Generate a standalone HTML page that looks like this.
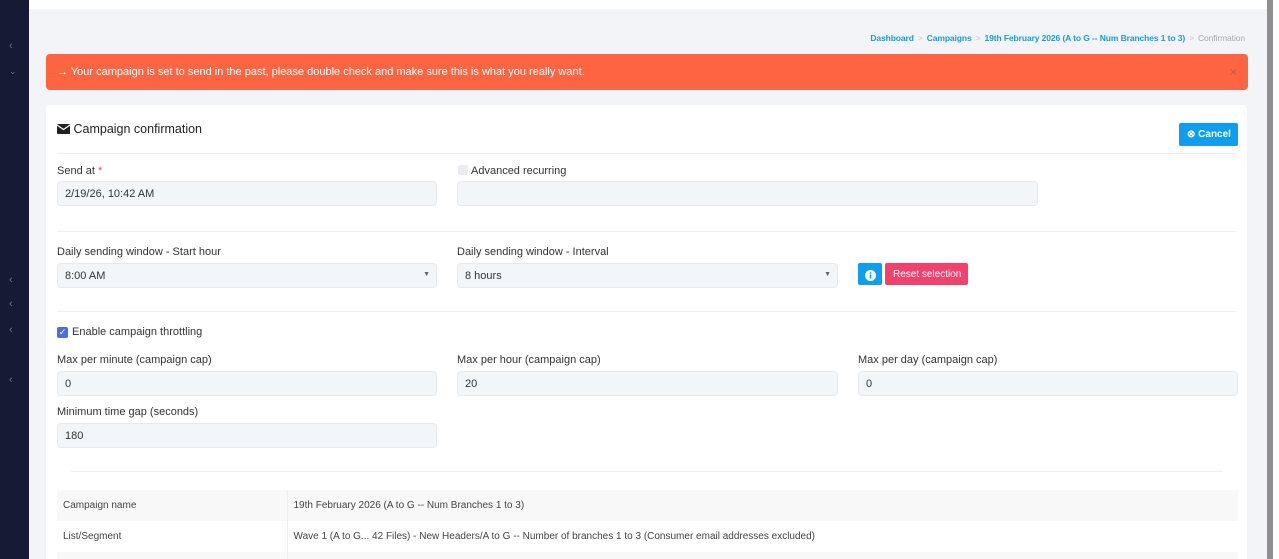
<!DOCTYPE html>
<html style="overflow:hidden;width:1279px;height:559px"><head><style>
*{box-sizing:border-box;margin:0;padding:0}
body{width:1279px;height:559px;overflow:hidden;background:#f2f4f7;font-family:"Liberation Sans",sans-serif;color:#333;position:relative}
.side{position:absolute;left:0;top:0;width:29px;height:559px;background:#151b33}
.side span{position:absolute;left:9px;color:#6a7190;font-size:11px}
.top{position:absolute;left:29px;top:0;right:0;height:9px;background:#fff}
.sb{position:absolute;left:1267px;top:0;width:6px;height:559px;background:#8f8f8f}
.sbw{position:absolute;left:1273px;top:0;width:6px;height:559px;background:#fff}
.bc{position:absolute;top:33px;right:34px;font-size:8.5px;font-weight:bold;color:#1a9be6;letter-spacing:-0.1px}
.bc i{font-style:normal;color:#c4c8cf;font-weight:normal;margin:0 4px}
.bc b{color:#a5aab2;font-weight:normal}
.alert{position:absolute;left:46px;top:54px;width:1202px;height:36px;background:#fd6442;border-radius:4px;color:#fff;font-size:11px;padding:12px 0 0 11px}
.alert .x{position:absolute;right:11px;top:11px;color:#b85a45;font-size:12px}
.card{position:absolute;left:46px;top:105px;width:1201px;height:454px;background:#fff;border-radius:4px 4px 0 0;overflow:hidden}
.abs{position:absolute}
.lbl{position:absolute;font-size:11px;color:#333}
.in{position:absolute;height:25px;background:#f3f6f9;border:1px solid #e6eaf0;border-radius:4px;font-size:11px;padding:6px 0 0 7px;color:#333}
.hr{position:absolute;height:1px;background:#edf0f3}
.arr{position:absolute;right:6px;top:7px;font-size:7px;color:#666}
td{font-size:10px;color:#444;height:31px;padding-left:6px}
</style></head><body>
<div class="side"><span style="top:40px">‹</span><span style="top:66px;font-size:9px">⌄</span><span style="top:274px">‹</span><span style="top:298px">‹</span><span style="top:324px">‹</span><span style="top:374px">‹</span></div>
<div class="top"></div>
<div class="bc">Dashboard<i>&gt;</i>Campaigns<i>&gt;</i>19th February 2026 (A to G -- Num Branches 1 to 3)<i>&gt;</i><b>Confirmation</b></div>
<div class="alert">→ Your campaign is set to send in the past, please double check and make sure this is what you really want.<span class="x">×</span></div>
<div class="card">
<div class="abs" style="left:11px;top:17px;font-size:12.5px;color:#222"><svg width="13" height="10" viewBox="0 0 13 10" style="vertical-align:-1px"><rect width="13" height="10" rx="1" fill="#222"/><path d="M0 1 L6.5 5.5 L13 1" stroke="#fff" stroke-width="1.2" fill="none"/></svg> Campaign confirmation</div>
<div class="abs" style="left:1133px;top:18px;width:59px;height:23px;background:#0d9ef0;border-radius:2px;color:#fff;font-size:10px;font-weight:bold;padding:6px 0 0 8px">⊗ Cancel</div>
<div class="hr" style="left:11px;top:48px;width:1179px"></div>
<div class="lbl" style="left:11px;top:60px">Send at <span style="color:#f1416c">*</span></div>
<div class="in" style="left:11px;top:76px;width:380px">2/19/26, 10:42 AM</div>
<div class="abs" style="left:412px;top:60px;width:10px;height:10px;background:#e8ebef;border-radius:2px"></div>
<div class="lbl" style="left:425px;top:60px">Advanced recurring</div>
<div class="in" style="left:411px;top:76px;width:581px"></div>
<div class="hr" style="left:11px;top:126px;width:1179px"></div>
<div class="lbl" style="left:11px;top:141px">Daily sending window - Start hour</div>
<div class="in" style="left:11px;top:158px;width:380px">8:00 AM<span class="arr">▼</span></div>
<div class="lbl" style="left:411px;top:141px">Daily sending window - Interval</div>
<div class="in" style="left:411px;top:158px;width:381px">8 hours<span class="arr">▼</span></div>
<div class="abs" style="left:812px;top:158px;width:24px;height:22px;background:#0d9ef0;border-radius:2px;text-align:center;padding-top:5px"><svg width="11" height="11" viewBox="0 0 11 11"><circle cx="5.5" cy="5.5" r="5.5" fill="#fff"/><rect x="4.8" y="4.5" width="1.5" height="4" fill="#0d9ef0"/><circle cx="5.5" cy="3" r="0.9" fill="#0d9ef0"/></svg></div>
<div class="abs" style="left:839px;top:158px;width:83px;height:22px;background:#f1416c;border-radius:2px;color:#fff;font-size:10px;padding:6px 0 0 8px">Reset selection</div>
<div class="hr" style="left:11px;top:206px;width:1179px"></div>
<div class="abs" style="left:11px;top:222px;width:11px;height:11px;background:#4a6ee0;border-radius:2px;color:#fff;font-size:9px;line-height:11px;text-align:center">✓</div>
<div class="lbl" style="left:26px;top:221px">Enable campaign throttling</div>
<div class="lbl" style="left:11px;top:249px">Max per minute (campaign cap)</div>
<div class="in" style="left:11px;top:266px;width:380px">0</div>
<div class="lbl" style="left:411px;top:249px">Max per hour (campaign cap)</div>
<div class="in" style="left:411px;top:266px;width:381px">20</div>
<div class="lbl" style="left:812px;top:249px">Max per day (campaign cap)</div>
<div class="in" style="left:812px;top:266px;width:380px">0</div>
<div class="lbl" style="left:11px;top:301px">Minimum time gap (seconds)</div>
<div class="in" style="left:11px;top:318px;width:380px">180</div>
<div class="hr" style="left:25px;top:366px;width:1152px"></div>
<table class="abs" style="left:11px;top:385px;width:1181px;border-collapse:collapse">
<tr style="background:#f8f8f8"><td style="width:230px;border-right:1px solid #eee">Campaign name</td><td>19th February 2026 (A to G -- Num Branches 1 to 3)</td></tr>
<tr><td style="border-right:1px solid #eee">List/Segment</td><td>Wave 1 (A to G... 42 Files) - New Headers/A to G -- Number of branches 1 to 3 (Consumer email addresses excluded)</td></tr>
<tr style="background:#f8f8f8"><td style="border-right:1px solid #eee"></td><td></td></tr>
</table>
</div>
<div class="sb"></div><div class="sbw"></div>
</body></html>
